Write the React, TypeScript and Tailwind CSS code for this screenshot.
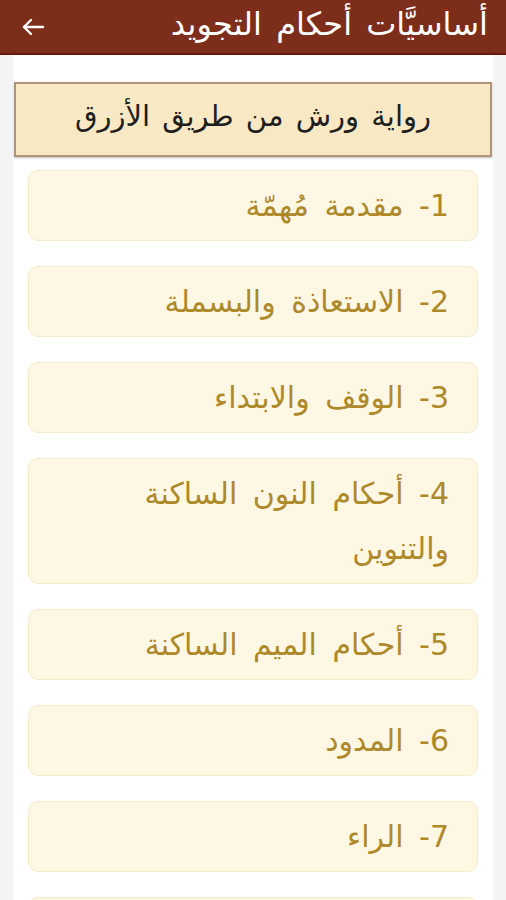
import React from "react";

const items: React.ReactNode[] = [
  "1- مقدمة مُهمّة",
  "2- الاستعاذة والبسملة",
  "3- الوقف والابتداء",
  <>
    4- أحكام النون الساكنة
    <br />
    والتنوين
  </>,
  "5- أحكام الميم الساكنة",
  "6- المدود",
  "7- الراء",
  "\u00a0",
];

export default function App() {
  return (
    <div
      className="w-[506px] h-[900px] overflow-hidden bg-[#f4f4f4] flex flex-col"
      style={{ fontFamily: '"DejaVu Sans", "Noto Sans", sans-serif' }}
    >
      <header className="h-[55px] shrink-0 bg-[#7c2e1b] border-b-2 border-[#65190f] flex items-center justify-between pl-[21px] pr-[18px]">
        <svg width="24" height="22" viewBox="0 0 24 22" fill="none" stroke="white" strokeWidth="2.4" strokeLinecap="round" strokeLinejoin="round">
          <path d="M22 11H3" />
          <path d="M10 4L3 11L10 18" />
        </svg>
        <div dir="rtl" className="text-white text-[32px] leading-none pb-[6px] [word-spacing:4px]">
          أساسيَّات أحكام التجويد
        </div>
      </header>
      <main className="flex-1 mx-[13px] bg-white pt-[27px] px-[1px] flex flex-col">
        <div className="h-[75px] shrink-0 bg-[#f8e8c3] border-2 border-[#b09478] shadow-[0_1px_2px_rgba(0,0,0,0.25)] flex items-center justify-center">
          <span dir="rtl" className="text-[#1e1e1e] text-[29px] leading-none pb-[6px] [word-spacing:3px]">
            رواية ورش من طريق الأزرق
          </span>
        </div>
        <div className="flex flex-col gap-[25px] mt-[13px] px-[14px]">
          {items.map((t, i) => (
            <div
              key={i}
              dir="rtl"
              className="bg-[#fdf7e3] border border-[#f5ebc9] rounded-[10px] py-[7px] pr-[28px] pl-[20px] text-[#ae892a] text-[30px] leading-[55px] shrink-0 [word-spacing:6px]"
            >
              {t}
            </div>
          ))}
        </div>
      </main>
    </div>
  );
}
